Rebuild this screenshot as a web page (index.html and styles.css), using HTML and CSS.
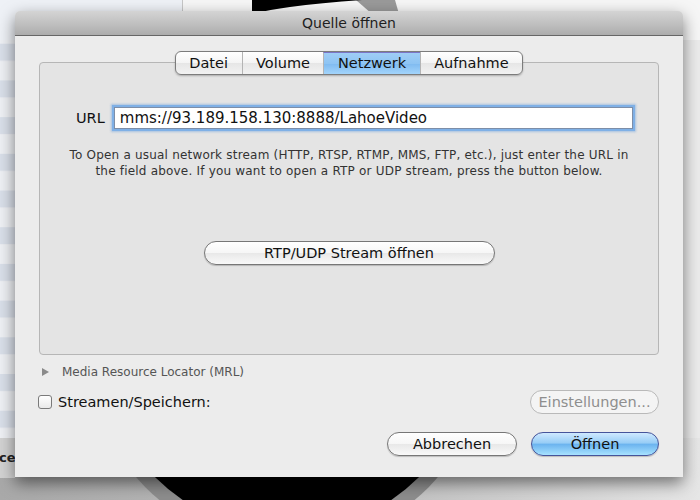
FILE: index.html
```html
<!DOCTYPE html>
<html lang="de">
<head>
    <meta charset="UTF-8">
    <title>Quelle öffnen</title>
    <link rel="stylesheet" href="styles.css">
</head>
<body>

    <div class="desktop">
        <!-- windows behind the dialog -->
        <svg class="backdrop" width="700" height="500" viewBox="0 0 700 500">
            <defs>
                <pattern id="rows" patternUnits="userSpaceOnUse" x="0" y="7" width="182" height="36.7">
                    <rect width="182" height="36.7" fill="#eef0f4"/>
                    <rect y="0" width="182" height="17" fill="#d9dfe9"/>
                </pattern>
                <linearGradient id="floor" x1="0" y1="0" x2="1" y2="0">
                    <stop offset="0" stop-color="#a9a9a9"/>
                    <stop offset="0.6" stop-color="#c4c4c4"/>
                    <stop offset="1" stop-color="#e6e6e6"/>
                </linearGradient>
            </defs>
            <rect width="700" height="500" fill="#ebebeb"/>
            <rect width="700" height="40" fill="#f6f6f6"/>
            <rect x="0" y="0" width="182" height="440" fill="url(#rows)"/>
            <rect x="0" y="0" width="182" height="40" fill="#eef1f6"/>
            <line x1="182.5" y1="0" x2="182.5" y2="40" stroke="#c6c6c6"/>
            <path d="M356 0 L395 0 L399 14 L372 14 Z" fill="#9a9a9a"/>
            <path d="M252 0 L362 0 Q320 3 290 7 Q268 10 252 14 Z" fill="#000"/>
            <rect x="0" y="438" width="700" height="62" fill="url(#floor)"/>
            <rect x="0" y="438" width="15" height="40" fill="#d2d2d2"/>
            <text x="-1" y="462" class="peek">ce</text>
            <circle cx="287" cy="346" r="200" fill="#8d8d8d"/>
            <circle cx="287" cy="346" r="186" fill="#000"/>
        </svg>

        <div class="dialog">
            <div class="titlebar">Quelle öffnen</div>

            <div class="dialog-body">
                <div class="tabs">
                    <span class="tab">Datei</span>
                    <span class="tab">Volume</span>
                    <span class="tab active">Netzwerk</span>
                    <span class="tab">Aufnahme</span>
                </div>

                <div class="panel">
                    <div class="url-row">
                        <label for="url">URL</label>
                        <input id="url" type="text" value="mms://93.189.158.130:8888/LahoeVideo">
                    </div>
                    <p class="hint">
                        To Open a usual network stream (HTTP, RTSP, RTMP, MMS, FTP, etc.), just enter the URL in<br>
                        the field above. If you want to open a RTP or UDP stream, press the button below.
                    </p>
                    <button class="btn btn-wide">RTP/UDP Stream öffnen</button>
                </div>

                <div class="mrl-row">
                    <span class="disclosure"></span>
                    Media Resource Locator (MRL)
                </div>

                <div class="stream-row">
                    <label class="check"><span class="box"></span>Streamen/Speichern:</label>
                    <button class="btn btn-disabled">Einstellungen...</button>
                </div>

                <div class="actions">
                    <button class="btn btn-cancel">Abbrechen</button>
                    <button class="btn btn-default">Öffnen</button>
                </div>
            </div>
        </div>
    </div>

</body>
</html>
```

FILE: styles.css
```css
* { margin: 0; padding: 0; box-sizing: border-box; font-family: "DejaVu Sans", "Liberation Sans", sans-serif; }
body {
    width: 700px;
    height: 500px;
    overflow: hidden;
}
.desktop {
    position: relative;
    width: 700px;
    height: 500px;
    padding: 11px 0 0 15px;
}
.backdrop {
    position: absolute;
    left: 0;
    top: 0;
}
.peek {
    font: bold 13px "DejaVu Sans", sans-serif;
    fill: #222;
}

/* Dialog window */
.dialog {
    position: relative;
    width: 668px;
    height: 466px;
    background: #ececec;
    border-radius: 5px 5px 0 0;
    box-shadow: 0 6px 16px rgba(0, 0, 0, 0.5);
    display: flex;
    flex-direction: column;
}
.titlebar {
    height: 25px;
    line-height: 24px;
    text-align: center;
    font-size: 14px;
    color: #1e1e1e;
    background: linear-gradient(#d4d4d4, #bdbdbd 60%, #acacac);
    border-bottom: 1px solid #666;
    border-radius: 5px 5px 0 0;
}
.dialog-body {
    flex: 1;
    padding: 15px 24px 0 24px;
}

/* Segmented tabs */
.tabs {
    position: relative;
    z-index: 1;
    display: flex;
    width: max-content;
    margin: 0 auto;
    height: 24px;
    border: 1px solid #7c7c7c;
    border-radius: 6px;
    background: linear-gradient(#ffffff, #f4f4f4 50%, #e6e6e6 51%, #f2f2f2);
    box-shadow: 0 1px 2px rgba(0, 0, 0, 0.25);
    overflow: hidden;
}
.tab {
    padding: 0 13.5px;
    font-size: 14.5px;
    line-height: 22px;
    color: #111;
    border-left: 1px solid #b4b4b4;
}
.tab:first-child {
    border-left: none;
}
.tab.active {
    background: linear-gradient(#9fcdf6, #8ec4f3 50%, #7fbaf0 51%, #a3d4fb);
    border-top: 1px solid #7a74c6;
    line-height: 21px;
}

.panel {
    margin-top: -13px;
    height: 293px;
    border: 1px solid #b6b6b6;
    border-radius: 4px;
    background: #e4e4e4;
    padding-top: 44px;
    text-align: center;
}
.url-row {
    display: flex;
    align-items: center;
    gap: 9px;
    padding: 0 25px 0 36px;
}
.url-row label {
    font-size: 14.5px;
    color: #111;
}
.url-row input {
    flex: 1;
    height: 22px;
    padding: 0 5px;
    font-size: 15px;
    color: #111;
    border: 1px solid #7d8ea8;
    background: #fff;
    box-shadow: 0 0 0 2px #7fb0e6, 0 0 2px 3px rgba(90, 150, 220, 0.45);
    outline: none;
}
.hint {
    margin-top: 18px;
    font-size: 12px;
    letter-spacing: 0.2px;
    line-height: 16px;
    color: #333;
}

/* Aqua buttons */
.btn {
    height: 24px;
    border-radius: 12px;
    border: 1px solid #777;
    background: linear-gradient(#ffffff, #f6f6f6 50%, #e8e8e8 51%, #f9f9f9);
    box-shadow: 0 1px 1px rgba(0, 0, 0, 0.2);
    font-size: 14.5px;
    color: #111;
    cursor: pointer;
}
.btn-wide {
    width: 291px;
    margin-top: 62px;
}
.btn-disabled {
    width: 129px;
    color: #8e8e8e;
    border-color: #b9b9b9;
    background: #f4f4f4;
    box-shadow: none;
}
.btn-cancel {
    width: 130px;
}
.btn-default {
    width: 128px;
    border-color: #46549a;
    background: linear-gradient(#cfe9ff, #97cdf6 45%, #6cb4ef 52%, #a7e2ff);
}

.mrl-row {
    display: flex;
    align-items: center;
    gap: 13px;
    height: 18px;
    margin-top: 8px;
    padding-left: 3px;
    font-size: 12px;
    color: #555;
}
.disclosure {
    width: 0;
    height: 0;
    border-top: 4px solid transparent;
    border-bottom: 4px solid transparent;
    border-left: 7px solid #8a8a8a;
}
.stream-row {
    display: flex;
    justify-content: space-between;
    align-items: center;
    margin-top: 9px;
}
.check {
    display: flex;
    align-items: center;
    gap: 6px;
    margin-left: -1px;
    font-size: 14.5px;
    color: #111;
}
.box {
    width: 14px;
    height: 14px;
    border: 1px solid #7a7a7a;
    border-radius: 3px;
    background: linear-gradient(#ffffff, #e9e9e9);
}
.actions {
    display: flex;
    justify-content: flex-end;
    gap: 14px;
    margin-top: 18px;
}
```
